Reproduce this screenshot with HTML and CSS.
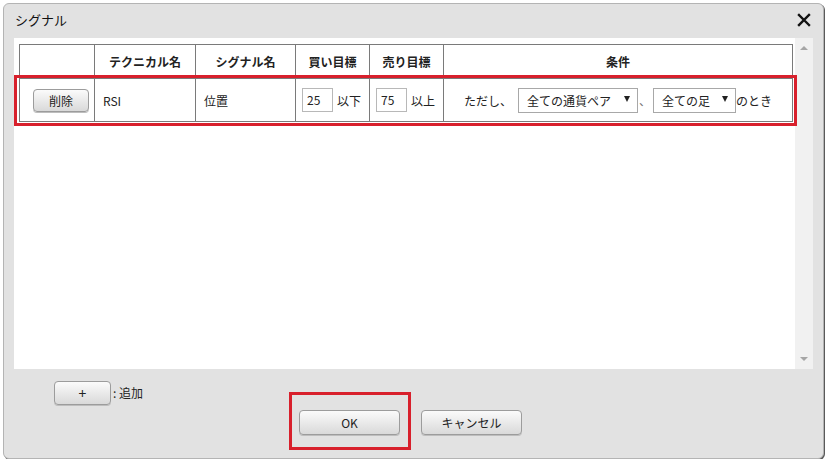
FILE: index.html
```html
<!DOCTYPE html>
<html lang="ja">
<head>
<meta charset="utf-8">
<link rel="stylesheet" href="styles.css">
</head>
<body>
<div class="dialog">
  <div class="titlebar">
    <span class="title">シグナル</span>
    <svg class="close" width="14" height="14" viewBox="0 0 14 14"><path d="M2 2 L12 12 M12 2 L2 12" stroke="#111" stroke-width="2.4" stroke-linecap="square"/></svg>
  </div>
  <div class="content">
    <div class="table-wrap">
      <table class="grid">
        <thead>
          <tr>
            <th class="c-del"></th>
            <th class="c-tech">テクニカル名</th>
            <th class="c-sig">シグナル名</th>
            <th class="c-buy">買い目標</th>
            <th class="c-sell">売り目標</th>
            <th class="c-cond">条件</th>
          </tr>
        </thead>
        <tbody>
          <tr>
            <td class="del-cell"><button class="btn btn-del">削除</button></td>
            <td class="pad">RSI</td>
            <td class="pad">位置</td>
            <td class="pad-s"><span class="num">25</span><span class="unit">以下</span></td>
            <td class="pad-s"><span class="num">75</span><span class="unit">以上</span></td>
            <td class="cond">
              <span class="cond-inner">
                <span class="lbl">ただし、</span>
                <span class="sel sel-pair"><span>全ての通貨ペア</span><i></i></span>
                <span class="comma">、</span>
                <span class="sel sel-foot"><span>全ての足</span><i></i></span>
                <span>のとき</span>
              </span>
            </td>
          </tr>
        </tbody>
      </table>
    </div>
    <div class="scrollbar">
      <span class="arrow up"></span>
      <span class="arrow down"></span>
    </div>
    <div class="mark mark-row"></div>
  </div>
  <div class="footer">
    <div class="add-row">
      <button class="btn btn-add">+</button><span class="add-lbl">: 追加</span>
    </div>
    <div class="actions">
      <span class="ok-wrap"><button class="btn btn-ok">OK</button><span class="mark mark-ok"></span></span>
      <button class="btn btn-cancel">キャンセル</button>
    </div>
  </div>
</div>
</body>
</html>
```
FILE: styles.css
```css
* { box-sizing: border-box; }
html, body { margin: 0; padding: 0; background: #ffffff; }
body {
  font-family: "Noto Sans CJK JP", "Noto Sans", "Liberation Sans", sans-serif;
  font-size: 12px;
  color: #222;
}
.dialog {
  margin: 3px 0 0 3px;
  width: 821px;
  height: 456px;
  background: #e2e2e2;
  border: 1px solid #b4b4b4;
  border-radius: 6px;
  box-shadow: 1px 1px 0 #5a5a5a;
  display: flex;
  flex-direction: column;
}
.titlebar {
  height: 34px;
  display: flex;
  align-items: center;
  justify-content: space-between;
  padding: 0 12px 4px 11px;
}
.title { font-size: 13px; color: #111; }
.close { display: block; margin-top: 1px; }
.content {
  position: relative;
  margin-left: 10px;
  width: 799px;
  height: 331px;
  background: #fff;
  display: flex;
}
.table-wrap {
  padding: 6px 0 0 5px;
  width: 781px;
}
.grid {
  border-collapse: collapse;
  width: 774px;
  table-layout: fixed;
}
.grid th, .grid td {
  border: 1px solid #7a7a7a;
  padding: 0;
}
.grid th {
  height: 34px;
  font-weight: bold;
  font-size: 12px;
  color: #222;
  text-align: center;
}
.grid td { height: 43px; }
.c-del { width: 75px; }
.c-tech { width: 101px; }
.c-sig { width: 100px; }
.c-buy { width: 74px; }
.c-sell { width: 74px; }
.grid .del-cell { padding-left: 13px; }
.grid .pad { padding-left: 8px; }
.grid .pad-s { padding-left: 6px; }
.num {
  display: inline-block;
  width: 31px;
  height: 24px;
  line-height: 22px;
  border: 1px solid #b8b8b8;
  padding-left: 4px;
  font-size: 12px;
  vertical-align: middle;
}
.unit { margin-left: 4px; vertical-align: middle; }
.cond { text-align: center; }
.cond-inner { display: inline-flex; align-items: center; margin-left: 0; }
.lbl { margin-right: 6px; }
.sel {
  display: inline-flex;
  align-items: center;
  justify-content: space-between;
  height: 25px;
  border: 1px solid #a8a8a8;
  padding: 0 7px 0 8px;
  background: #fff;
}
.sel i {
  display: block;
  width: 0; height: 0;
  border-left: 3px solid transparent;
  border-right: 3px solid transparent;
  border-top: 6px solid #222;
  margin-top: -2px;
}
.sel-pair { width: 120px; }
.sel-foot { width: 83px; }
.comma { color: #777; width: 15px; text-align: left; padding-left: 1px; }
.mark {
  position: absolute;
  border: 3px solid #d8202c;
  pointer-events: none;
  z-index: 2;
}
.mark-row { left: 0; top: 37px; width: 783px; height: 51px; }
.scrollbar {
  width: 18px;
  background: #f1f1f1;
  position: relative;
}
.arrow {
  position: absolute;
  left: 5px;
  width: 0; height: 0;
  border-left: 4px solid transparent;
  border-right: 4px solid transparent;
}
.arrow.up { top: 8px; border-bottom: 4px solid #a6a6a6; }
.arrow.down { bottom: 8px; border-top: 4px solid #a6a6a6; }
.footer { position: relative; flex: 1; }
.btn {
  font-family: inherit;
  font-size: 12px;
  color: #222;
  background: linear-gradient(#fbfbfb, #d9d9d9);
  border: 1px solid #9c9c9c;
  border-radius: 4px;
  box-shadow: 0 1px 0 #bdbdbd;
  padding: 0;
  cursor: pointer;
}
.btn-del { width: 56px; height: 23px; }
.add-row {
  display: flex;
  align-items: center;
  padding: 11px 0 0 50px;
  height: 36px;
}
.btn-add { width: 57px; height: 24px; font-size: 14px; }
.add-lbl { margin-left: 2px; }
.actions {
  display: flex;
  align-items: center;
  padding-left: 295px;
  margin-top: 5px;
  gap: 21px;
}
.ok-wrap { position: relative; display: inline-block; }
.btn-ok { width: 101px; height: 25px; display: block; }
.btn-cancel { width: 101px; height: 25px; }
.mark-ok { left: -10px; top: -18px; width: 122px; height: 58px; }
```
